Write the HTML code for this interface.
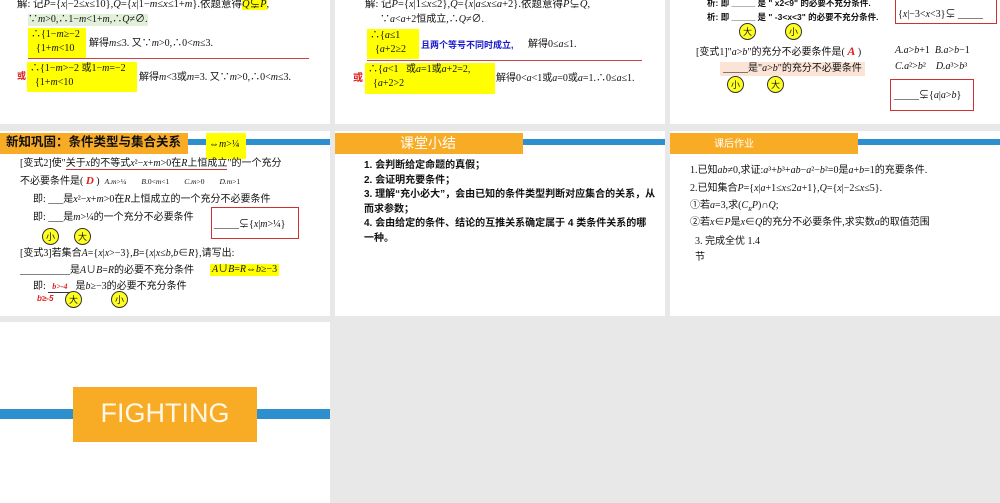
<!DOCTYPE html>
<html><head><meta charset="utf-8"><style>
*{margin:0;padding:0;box-sizing:border-box}
body{width:1000px;height:503px;background:#e8e8e8;position:relative;overflow:hidden;font-family:"Liberation Serif","Noto Sans CJK SC",serif;color:#111}
.s{position:absolute;background:#fff;overflow:hidden}
.t{position:absolute;white-space:nowrap;font-size:10px;line-height:12px}
.y{background:#ffff00}
.r{color:#e02020}
.hd{position:absolute;top:2px;height:21px;background:#f8ab24;color:#fff}
.bl{position:absolute;top:8px;height:6px;background:#2e8fce}
.c{position:absolute;width:17px;height:17px;border-radius:50%;background:#ffff20;border:1px solid #333;font-size:9px;line-height:15px;text-align:center;font-family:"Noto Sans CJK SC",sans-serif}
.box{position:absolute;border:1.5px solid #d03030}
.b{font-weight:bold;font-family:"Liberation Sans","Noto Sans CJK SC",sans-serif}
</style></head><body>

<!-- slide 1 -->
<div class="s" style="left:0;top:0;width:330px;height:124px">
<div class="t" style="left:17px;top:-1px;font-size:10.5px">解: 记<i>P</i>={<i>x</i>|−2≤<i>x</i>≤10},<i>Q</i>={<i>x</i>|1−<i>m</i>≤<i>x</i>≤1+<i>m</i>}.依题意得<span class="y"><i>Q</i>⊊<i>P</i></span>,</div>
<div class="t" style="left:28px;top:14px;background:#e2f0d9"> ∵<i>m</i>&gt;0,∴1−<i>m</i>&lt;1+<i>m</i>,∴<i>Q</i>≠∅.</div>
<div class="t y" style="left:28px;top:28px;width:58px;height:30px;line-height:14px;padding-left:3px">∴{1−<i>m</i>≥−2<br>&nbsp;&nbsp;{1+<i>m</i>&lt;10</div>
<div class="t" style="left:89px;top:38px">解得<i>m</i>≤3. 又∵<i>m</i>&gt;0,∴0&lt;<i>m</i>≤3.</div>
<div style="position:absolute;left:28px;top:58px;width:281px;height:1px;background:#c44"></div>
<div class="t r b" style="left:17px;top:70px;font-size:9px">或</div>
<div class="t y" style="left:27px;top:62px;width:110px;height:30px;line-height:14px;padding-left:3px">∴{1−<i>m</i>&gt;−2 或1−<i>m</i>=−2<br>&nbsp;&nbsp;{1+<i>m</i>&lt;10</div>
<div class="t" style="left:139px;top:72px">解得<i>m</i>&lt;3或<i>m</i>=3. 又∵<i>m</i>&gt;0,∴0&lt;<i>m</i>≤3.</div>
</div>

<!-- slide 2 -->
<div class="s" style="left:335px;top:0;width:330px;height:124px">
<div class="t" style="left:30px;top:-1px;font-size:10.5px">解: 记<i>P</i>={<i>x</i>|1≤<i>x</i>≤2},<i>Q</i>={<i>x</i>|<i>a</i>≤<i>x</i>≤<i>a</i>+2}.依题意得<i>P</i>⊊<i>Q</i>,</div>
<div class="t" style="left:45px;top:14px">∵<i>a</i>&lt;<i>a</i>+2恒成立,∴<i>Q</i>≠∅.</div>
<div class="t y" style="left:32px;top:29px;width:52px;height:30px;line-height:14px;padding-left:3px">∴{<i>a</i>≤1<br>&nbsp;&nbsp;{<i>a</i>+2≥2</div>
<div class="t b" style="left:86px;top:39px;color:#1a1acc;font-size:9px">且两个等号不同时成立,</div>
<div class="t" style="left:193px;top:39px">解得0≤<i>a</i>≤1.</div>
<div style="position:absolute;left:32px;top:60px;width:275px;height:1px;background:#c44"></div>
<div class="t r b" style="left:18px;top:73px">或</div>
<div class="t y" style="left:30px;top:63px;width:130px;height:31px;line-height:14px;padding-left:3px">∴{<i>a</i>&lt;1 &nbsp;&nbsp;或<i>a</i>=1或<i>a</i>+2=2,<br>&nbsp;&nbsp;{<i>a</i>+2&gt;2</div>
<div class="t" style="left:161px;top:73px">解得0&lt;<i>a</i>&lt;1或<i>a</i>=0或<i>a</i>=1.∴0≤<i>a</i>≤1.</div>
</div>

<!-- slide 3 -->
<div class="s" style="left:670px;top:0;width:330px;height:124px">
<div class="t b" style="left:37px;top:-3px;font-size:8.5px">析: 即 _____ 是 " x2&lt;9" 的必要不充分条件.</div>
<div class="t b" style="left:37px;top:11px;font-size:8.5px">析: 即 _____ 是 " -3&lt;x&lt;3" 的必要不充分条件.</div>
<div class="box" style="left:225px;top:-4px;width:102px;height:28px"></div>
<div class="t" style="left:228px;top:9px">{<i>x</i>|−3&lt;<i>x</i>&lt;3}⊊ _____</div>
<div class="c" style="left:69px;top:23px">大</div><div class="c" style="left:115px;top:23px">小</div>
<div class="t" style="left:26px;top:45px">[变式1]"<i>a</i>&gt;<i>b</i>"的充分不必要条件是( <b class="r" style="font-size:12px"><i>A</i></b> )</div>
<div class="t" style="left:225px;top:45px"><i>A.a</i>&gt;<i>b</i>+1 &nbsp;<i>B.a</i>&gt;<i>b</i>−1</div>
<div class="t" style="left:225px;top:61px"><i>C.a</i>²&gt;<i>b</i>² &nbsp;&nbsp;&nbsp;<i>D.a</i>³&gt;<i>b</i>³</div>
<div class="t" style="left:50px;top:62px;background:#fbe3d6;padding:1px 3px">_____是"<i>a</i>&gt;<i>b</i>"的充分不必要条件</div>
<div class="c" style="left:57px;top:76px">小</div><div class="c" style="left:97px;top:76px">大</div>
<div class="box" style="left:220px;top:79px;width:84px;height:32px"></div>
<div class="t" style="left:224px;top:90px">_____⊊{<i>a</i>|<i>a</i>&gt;<i>b</i>}</div>
</div>

<!-- slide 4 -->
<div class="s" style="left:0;top:131px;width:330px;height:185px">
<div class="hd" style="left:0;width:188px"></div>
<div class="t b" style="left:6px;top:4px;font-size:12.5px;line-height:15px;color:#111">新知巩固：条件类型与集合关系</div>
<div class="bl" style="left:188px;width:142px"></div>
<div class="t y" style="left:206px;top:2px;width:40px;height:26px;line-height:24px;padding-left:3px">⇔<i>m</i>&gt;¼</div>
<div class="t" style="left:20px;top:27px">[变式2]使"<span style="border-bottom:1px solid #c33">关于<i>x</i>的不等式<i>x</i>²−<i>x</i>+<i>m</i>&gt;0在<i>R</i>上恒成立</span>"的一个充分</div>
<div class="t" style="left:20px;top:44px">不必要条件是( <b class="r" style="font-size:11px"><i>D</i></b> ) &nbsp;<span style="font-size:7.5px"><i>A.m</i>&gt;¼ &nbsp;&nbsp;&nbsp;&nbsp;&nbsp;&nbsp;&nbsp;<i>B</i>.0&lt;<i>m</i>&lt;1 &nbsp;&nbsp;&nbsp;&nbsp;&nbsp;&nbsp;&nbsp;<i>C.m</i>&gt;0 &nbsp;&nbsp;&nbsp;&nbsp;&nbsp;&nbsp;&nbsp;<i>D.m</i>&gt;1</span></div>
<div class="t" style="left:33px;top:63px">即: ___是<i>x</i>²−<i>x</i>+<i>m</i>&gt;0在<i>R</i>上恒成立的一个充分不必要条件</div>
<div class="t" style="left:33px;top:81px">即: ___是<i>m</i>&gt;¼的一个充分不必要条件</div>
<div class="box" style="left:211px;top:76px;width:88px;height:32px"></div>
<div class="t" style="left:214px;top:88px">_____⊊{<i>x</i>|<i>m</i>&gt;¼}</div>
<div class="c" style="left:42px;top:97px">小</div><div class="c" style="left:74px;top:97px">大</div>
<div class="t" style="left:20px;top:117px">[变式3]若集合<i>A</i>={<i>x</i>|<i>x</i>&gt;−3},<i>B</i>={<i>x</i>|<i>x</i>≤<i>b</i>,<i>b</i>∈<i>R</i>},请写出:</div>
<div class="t" style="left:20px;top:134px">__________是<i>A</i>∪<i>B</i>=<i>R</i>的必要不充分条件</div>
<div class="t y" style="left:210px;top:133px;padding:0 2px"><i>A</i>∪<i>B</i>=<i>R</i>⇔<i>b</i>≥−3</div>
<div class="t" style="left:33px;top:150px">即: <span style="border-bottom:1px solid #333"><b class="r" style="font-size:8px"><i>&nbsp;&nbsp;b&gt;-4&nbsp;&nbsp;&nbsp;&nbsp;</i></b></span>是<i>b</i>≥−3的必要不充分条件</div>
<div class="t r b" style="left:37px;top:162px;font-size:8px"><i>b≥-5</i></div>
<div class="c" style="left:65px;top:160px">大</div><div class="c" style="left:111px;top:160px">小</div>
</div>

<!-- slide 5 -->
<div class="s" style="left:335px;top:131px;width:330px;height:185px">
<div class="hd" style="left:0;width:188px"></div>
<div class="t" style="left:65px;top:4px;font-size:14px;line-height:16px;color:#fff;font-family:'Noto Sans CJK SC',sans-serif">课堂小结</div>
<div class="bl" style="left:188px;width:142px"></div>
<div class="b" style="position:absolute;left:29px;top:28px;width:292px;font-size:10px;line-height:14.5px;color:#111">1. 会判断给定命题的真假；<br>2. 会证明充要条件；<br>3. 理解“充小必大”，会由已知的条件类型判断对应集合的关系，从而求参数；<br>4. 会由给定的条件、结论的互推关系确定属于 4 类条件关系的哪一种。</div>
</div>

<!-- slide 6 -->
<div class="s" style="left:670px;top:131px;width:330px;height:185px">
<div class="hd" style="left:0;width:188px"></div>
<div class="t" style="left:44px;top:6px;font-size:10px;color:#fff;font-family:'Noto Sans CJK SC',sans-serif">课后作业</div>
<div class="bl" style="left:188px;width:142px"></div>
<div class="t" style="left:20px;top:34px">1.已知<i>ab</i>≠0,求证:<i>a</i>³+<i>b</i>³+<i>ab</i>−<i>a</i>²−<i>b</i>²=0是<i>a</i>+<i>b</i>=1的充要条件.</div>
<div class="t" style="left:20px;top:52px">2.已知集合<i>P</i>={<i>x</i>|<i>a</i>+1≤<i>x</i>≤2<i>a</i>+1},<i>Q</i>={<i>x</i>|−2≤<i>x</i>≤5}.</div>
<div class="t" style="left:20px;top:69px">①若<i>a</i>=3,求(<i>C<sub style="font-size:6px">R</sub>P</i>)∩<i>Q</i>;</div>
<div class="t" style="left:20px;top:86px">②若<i>x</i>∈<i>P</i>是<i>x</i>∈<i>Q</i>的充分不必要条件,求实数<i>a</i>的取值范围</div>
<div class="t" style="left:25px;top:105px">3. 完成全优 1.4</div>
<div class="t" style="left:25px;top:121px">节</div>
</div>

<!-- slide 7 -->
<div class="s" style="left:0;top:322px;width:330px;height:181px">
<div style="position:absolute;left:0;top:87px;width:330px;height:10px;background:#2e8fce"></div>
<div style="position:absolute;left:73px;top:65px;width:184px;height:55px;background:#f8ab24"></div>
<div class="t" style="left:73px;top:75px;width:184px;text-align:center;font-size:27px;line-height:32px;color:#fff8e8;font-family:'Liberation Sans',sans-serif">FIGHTING</div>
</div>

</body></html>
